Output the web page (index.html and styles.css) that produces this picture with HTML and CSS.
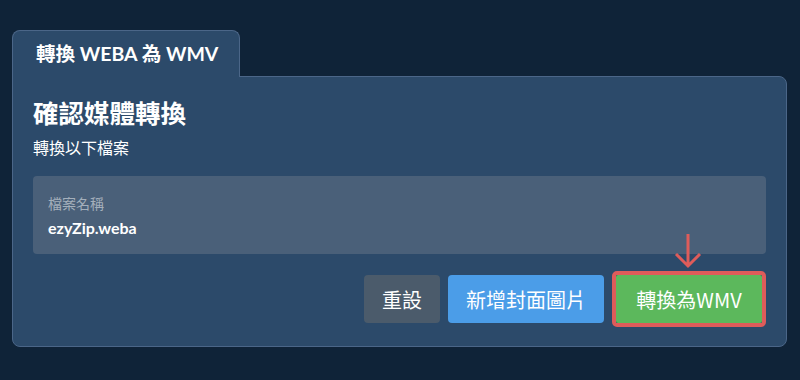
FILE: index.html
```html
<!DOCTYPE html>
<html lang="zh-Hant">
<head>
    <meta charset="UTF-8">
    <meta name="viewport" content="width=device-width, initial-scale=1.0">
    <title>轉換 WEBA 為 WMV</title>
    <link rel="stylesheet" href="styles.css">
</head>
<body>
    <div class="page">
        <!-- 分頁標籤 -->
        <div class="tabs">
            <div class="tab">轉換 WEBA 為 WMV</div>
        </div>

        <!-- 轉換卡片 -->
        <div class="card">
            <h2 class="card-title">確認媒體轉換</h2>
            <p class="card-sub">轉換以下檔案</p>

            <div class="file-box">
                <div class="file-label">檔案名稱</div>
                <div class="file-name">ezyZip.weba</div>
            </div>

            <div class="actions">
                <button class="btn btn-reset">重設</button>
                <button class="btn btn-cover">新增封面圖片</button>
                <div class="highlight">
                    <svg class="arrow" width="28" height="36" viewBox="0 0 28 36">
                        <path d="M14 1 V33 M2 21 L14 33 L26 21" fill="none" stroke="#de5c5a" stroke-width="3"/>
                    </svg>
                    <button class="btn btn-convert">轉換為WMV</button>
                </div>
            </div>
        </div>
    </div>
</body>
</html>
```

FILE: styles.css
```css
body {
    margin: 0;
    background: #0f2338;
    font-family: Lato, "Noto Sans CJK TC", sans-serif;
    color: #fff;
}
.page {
    padding: 30px 13px 0 12px;
}

/* 分頁 */
.tabs {
    display: flex;
}
.tab {
    position: relative;
    z-index: 1;
    margin-bottom: -1px;
    width: 180px;
    padding: 13px 23px 13px 23px;
    font-size: 19.5px;
    font-weight: bold;
    line-height: 20px;
    background: #2c4a6a;
    border: 1px solid #4b6688;
    border-bottom: none;
    border-radius: 8px 8px 0 0;
    white-space: nowrap;
}

/* 卡片 */
.card {
    padding: 22px 20px 19px 20px;
    background: #2c4a6a;
    border: 1px solid #4b6688;
    border-radius: 0 8px 8px 8px;
}
.card-title {
    margin: 0;
    font-size: 25.5px;
    line-height: 29px;
    font-weight: bold;
}
.card-sub {
    margin: 8px 0 16px 0;
    font-size: 16px;
    line-height: 24px;
}

.file-box {
    padding: 18px 15px 14px 15px;
    background: #4a6079;
    border-radius: 4px;
}
.file-label {
    font-size: 14px;
    line-height: 20px;
    color: #a4afbb;
}
.file-name {
    margin-top: 2px;
    font-size: 16px;
    line-height: 24px;
    font-weight: bold;
}

/* 按鈕 */
.actions {
    display: flex;
    justify-content: flex-end;
    align-items: center;
    gap: 8px;
    margin-top: 17px;
}
.btn {
    height: 48px;
    padding: 0 18px;
    font-family: "Noto Sans CJK TC", sans-serif;
    font-size: 20px;
    color: #fff;
    border: none;
    border-radius: 4px;
    cursor: pointer;
}
.btn-reset {
    background: #4b5b6b;
}
.btn-cover {
    background: #4b9de8;
}
.highlight {
    position: relative;
    display: flex;
    border: 4px solid #de5c5a;
    border-radius: 5px;
}
.btn-convert {
    width: 146px;
    padding: 0;
    background: #5cb85c;
    border-radius: 2px;
}
.arrow {
    position: absolute;
    left: 58px;
    top: -42px;
}
```
